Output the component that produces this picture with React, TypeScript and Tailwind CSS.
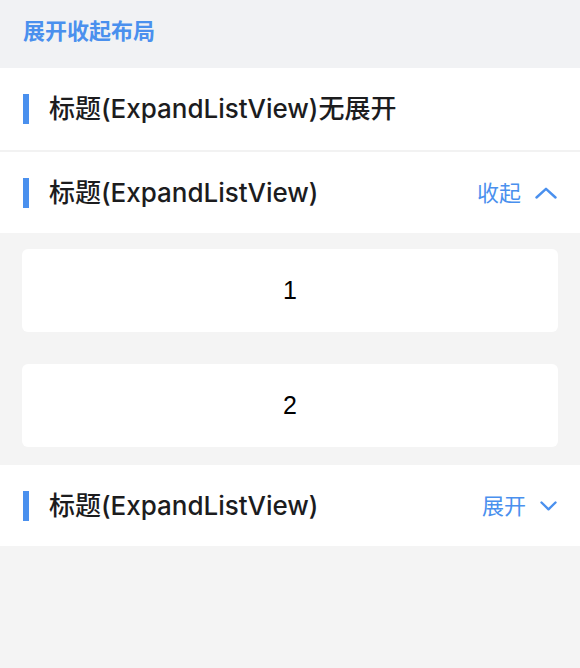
import React from "react";

const font = { fontFamily: '"Inter", "Noto Sans CJK SC", sans-serif' };
const numFont = { fontFamily: '"Liberation Sans", Arial, sans-serif' };

function ChevronUp() {
  return (
    <svg width="22" height="12" viewBox="0 0 22 12" fill="none" className="block">
      <path d="M1.5 10.5 L11 1.8 L20.5 10.5" stroke="#4a90ee" strokeWidth="2.4" strokeLinecap="round" strokeLinejoin="round" />
    </svg>
  );
}

function ChevronDown() {
  return (
    <svg width="17" height="10" viewBox="0 0 17 10" fill="none" className="block">
      <path d="M1.5 1.5 L8.5 8.3 L15.5 1.5" stroke="#4a90ee" strokeWidth="2.4" strokeLinecap="round" strokeLinejoin="round" />
    </svg>
  );
}

function TitleRow({ title, action, up, h }: { title: string; action?: string; up?: boolean; h: string }) {
  return (
    <div className={`flex items-center bg-white pl-[23px] pr-[23px] ${h}`}>
      <div className="w-[6px] h-[30px] bg-[#4a90ee]" />
      <div className="ml-[20px] text-[26px] font-medium text-[#1c1c1e] leading-none flex-1">{title}</div>
      {action && (
        <div className="flex items-center gap-[14px]">
          <span className="text-[22px] text-[#4a90ee] leading-none">{action}</span>
          {up ? <ChevronUp /> : <ChevronDown />}
        </div>
      )}
    </div>
  );
}

export default function App() {
  return (
    <div className="w-[580px] h-[668px] bg-[#f4f4f4] flex flex-col" style={font}>
      <div className="h-[68px] bg-[#f1f2f4] flex items-center pl-[23px] pb-[6px]">
        <span className="text-[22px] font-semibold text-[#4a90ee] leading-none">展开收起布局</span>
      </div>
      <TitleRow title="标题(ExpandListView)无展开" h="h-[82px]" />
      <div className="h-[2px] bg-[#f2f2f2]" />
      <TitleRow title="标题(ExpandListView)" action="收起" up h="h-[81px]" />
      <div className="flex flex-col gap-[32px] px-[22px] pt-[16px] pb-[18px]">
        <div className="h-[83px] bg-white rounded-[6px] flex items-center justify-center text-[25px] text-black" style={numFont}>1</div>
        <div className="h-[83px] bg-white rounded-[6px] flex items-center justify-center text-[25px] text-black" style={numFont}>2</div>
      </div>
      <TitleRow title="标题(ExpandListView)" action="展开" h="h-[81px]" />
    </div>
  );
}
